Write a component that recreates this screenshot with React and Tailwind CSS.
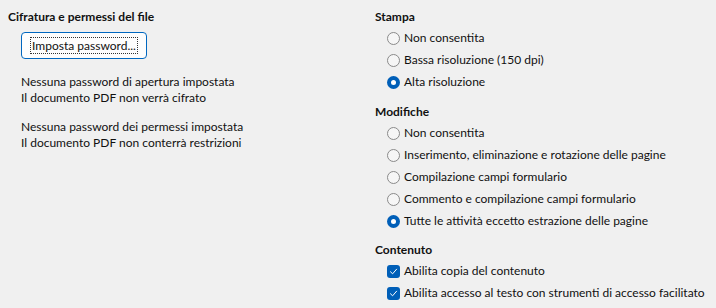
import { useState } from "react";

function Radio({ checked, label }) {
  return (
    <div className="flex h-[22px] items-center">
      <span
        className={
          checked
            ? "ml-[12px] flex h-[13px] w-[13px] items-center justify-center rounded-full bg-[#005fb8]"
            : "ml-[12px] h-[13px] w-[13px] rounded-full border border-[#8a8a8a] bg-[#f6f6f6]"
        }
      >
        {checked && <span className="h-[5px] w-[5px] rounded-full bg-white" />}
      </span>
      <span className="ml-[4px]">{label}</span>
    </div>
  );
}

function Check({ label }) {
  return (
    <div className="flex h-[22px] items-center">
      <span className="ml-[12px] flex h-[13px] w-[13px] items-center justify-center rounded-[3px] bg-[#005fb8]">
        <svg width="9" height="9" viewBox="0 0 9 9" fill="none">
          <path d="M1.5 4.8 L3.6 6.8 L7.6 2.2" stroke="white" strokeWidth="1" strokeLinecap="round" strokeLinejoin="round" />
        </svg>
      </span>
      <span className="ml-[4px]">{label}</span>
    </div>
  );
}

function Section({ title, className, children }) {
  return (
    <div className={className}>
      <div className="flex h-[20px] items-center font-bold">{title}</div>
      {children}
    </div>
  );
}

export default function App() {
  const [print] = useState(2);
  const [edit] = useState(4);

  const printOpts = ["Non consentita", "Bassa risoluzione (150 dpi)", "Alta risoluzione"];
  const editOpts = [
    "Non consentita",
    "Inserimento, eliminazione e rotazione delle pagine",
    "Compilazione campi formulario",
    "Commento e compilazione campi formulario",
    "Tutte le attività eccetto estrazione delle pagine",
  ];

  return (
    <div className="flex h-[308px] w-[716px] bg-[#f0f0f0] text-[12px] text-[#111] font-['Lato',sans-serif]">
      {/* left column */}
      <div className="w-[375px] pl-[8px] pt-[7px]">
        <div className="flex h-[20px] items-center font-bold">Cifratura e permessi del file</div>
        <div className="mt-[5px] pl-[13px]">
          <button className="flex h-[27px] w-[126px] items-center justify-center rounded-[4px] border border-[#0067c0] bg-[#fdfdfd]">
            <span className="border border-dotted border-[#333] px-[1px] leading-[15px]">Imposta password...</span>
          </button>
        </div>
        <div className="mt-[15px] pl-[13px] leading-[16px]">
          <div>Nessuna password di apertura impostata</div>
          <div>Il documento PDF non verrà cifrato</div>
        </div>
        <div className="mt-[13px] pl-[13px] leading-[16px]">
          <div>Nessuna password dei permessi impostata</div>
          <div>Il documento PDF non conterrà restrizioni</div>
        </div>
      </div>

      {/* right column */}
      <div className="flex-1 pt-[7px]">
        <Section title="Stampa">
          {printOpts.map((o, i) => (
            <Radio key={o} label={o} checked={i === print} />
          ))}
        </Section>
        <Section title="Modifiche" className="mt-[9px]">
          {editOpts.map((o, i) => (
            <Radio key={o} label={o} checked={i === edit} />
          ))}
        </Section>
        <Section title="Contenuto" className="mt-[8px]">
          <Check label="Abilita copia del contenuto" />
          <Check label="Abilita accesso al testo con strumenti di accesso facilitato" />
        </Section>
      </div>
    </div>
  );
}
